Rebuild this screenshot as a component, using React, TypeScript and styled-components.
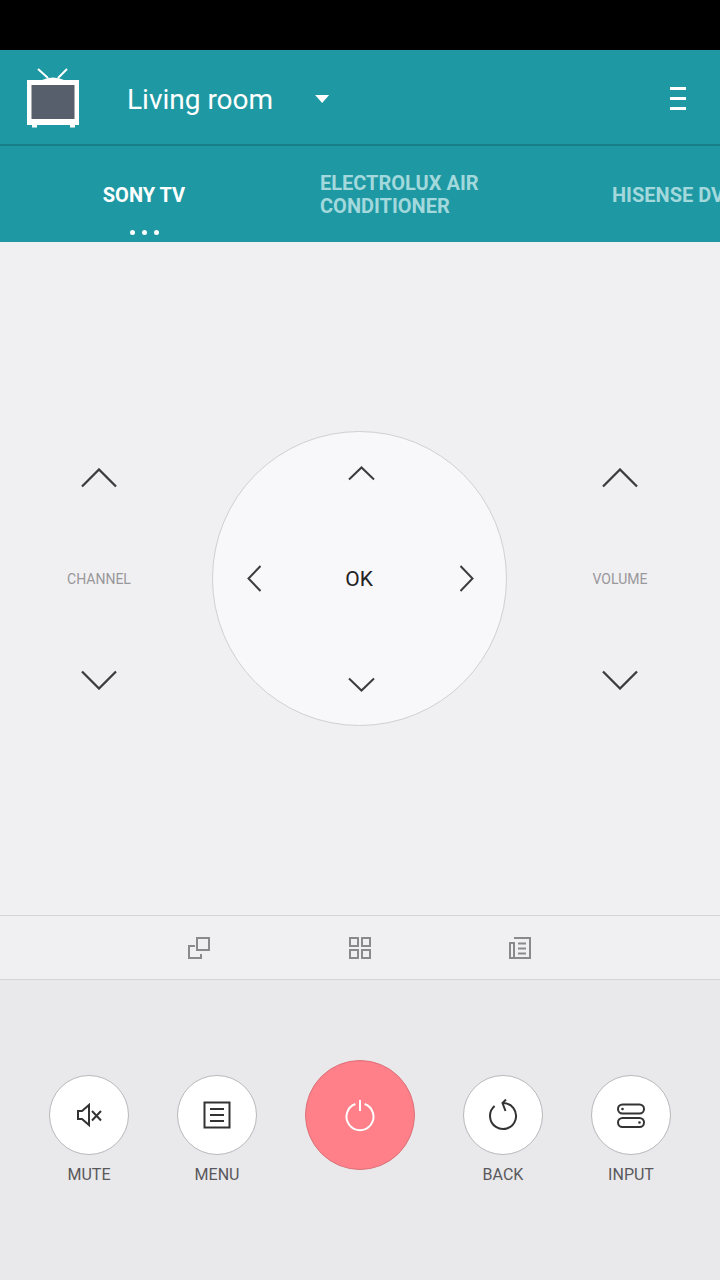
import React from "react";
import styled, { createGlobalStyle } from "styled-components";

const GlobalStyle = createGlobalStyle`
  html, body {
    margin: 0;
    padding: 0;
    background: #000;
  }
  * {
    box-sizing: border-box;
  }
`;

const Screen = styled.div`
  width: 720px;
  height: 1280px;
  display: flex;
  flex-direction: column;
  overflow: hidden;
  font-family: Roboto, "Liberation Sans", sans-serif;
`;

const StatusBar = styled.div`
  height: 50px;
  flex: none;
  background: #000;
`;

const Header = styled.header`
  height: 96px;
  flex: none;
  display: flex;
  align-items: center;
  padding: 2px 34px 0 25px;
  background: #1e99a3;
  border-bottom: 2px solid #187f89;
`;

const RoomName = styled.span`
  margin: 2px 0 0 46px;
  font-size: 28px;
  font-weight: 400;
  color: #fff;
`;

const Caret = styled.span`
  margin: 2px auto 0 42px;
  width: 14px;
  height: 8px;
  background: #fff;
  clip-path: polygon(0 0, 100% 0, 50% 100%);
`;

const TabStrip = styled.nav`
  height: 96px;
  flex: none;
  display: flex;
  background: #1e99a3;
  overflow: hidden;
`;

const Tab = styled.div<{ $width: number; $active?: boolean }>`
  position: relative;
  flex: 0 0 ${({ $width }) => $width}px;
  width: ${({ $width }) => $width}px;
  padding: ${({ $active }) => ($active ? "2px 0 0" : "2px 32px 0")};
  display: flex;
  align-items: center;
  justify-content: ${({ $active }) => ($active ? "center" : "flex-start")};
  font-size: 20px;
  font-weight: 700;
  line-height: 23px;
  color: ${({ $active }) => ($active ? "#fff" : "#a3d8dc")};
`;

const NoWrap = styled.span`
  white-space: nowrap;
`;

const Dots = styled.div`
  position: absolute;
  left: 0;
  right: 0;
  bottom: 7px;
  display: flex;
  justify-content: center;
  gap: 7px;
`;

const Dot = styled.i`
  width: 5px;
  height: 5px;
  border-radius: 50%;
  background: #fff;
`;

const Pad = styled.main`
  flex: 1;
  display: flex;
  align-items: center;
  justify-content: space-between;
  padding: 0 35px 0 34px;
  background: #f0eff1;
`;

const Rocker = styled.div`
  width: 130px;
  height: 222px;
  display: flex;
  flex-direction: column;
  align-items: center;
  justify-content: space-between;
`;

const RockerLabel = styled.span`
  font-size: 14px;
  color: #98979b;
`;

const Wheel = styled.div`
  width: 295px;
  height: 295px;
  display: grid;
  grid-template-columns: 83px 1fr 79px;
  grid-template-rows: 82px 1fr 82px;
  place-items: center;
  border: 1px solid #d0cfd2;
  border-radius: 50%;
  background: #f8f7fa;
`;

const WheelSlot = styled.div<{ $column: number; $row: number }>`
  grid-column: ${({ $column }) => $column};
  grid-row: ${({ $row }) => $row};
  display: flex;
`;

const OkLabel = styled.span`
  margin: 1px 5px 0 0;
  font-size: 21px;
  color: #222;
`;

const ShortcutBar = styled.div`
  height: 65px;
  flex: none;
  display: flex;
  align-items: center;
  justify-content: center;
  gap: 138px;
  background: #f0eff1;
  border-top: 1px solid #d5d4d7;
  border-bottom: 1px solid #d5d4d7;
`;

const Controls = styled.section`
  height: 300px;
  flex: none;
  display: grid;
  grid-template-columns: 128px 128px 158px 128px 128px;
  align-items: start;
  padding: 80px 25px 0;
  background: #e9e8ea;
`;

const Control = styled.div`
  display: flex;
  flex-direction: column;
  align-items: center;
  padding-top: 15px;
`;

const RoundButton = styled.button`
  width: 80px;
  height: 80px;
  padding: 0;
  display: flex;
  align-items: center;
  justify-content: center;
  border: 1px solid #b9b8bb;
  border-radius: 50%;
  background: #fff;
`;

const PowerButton = styled(RoundButton)`
  width: 110px;
  height: 110px;
  justify-self: center;
  border-color: #dc7078;
  background: #ff8088;
`;

const ControlLabel = styled.span`
  margin-top: 10px;
  font-size: 16px;
  line-height: 20px;
  color: #59585c;
`;

function TvLogo() {
  return (
    <svg width="56" height="62" viewBox="0 0 56 62">
      <path d="M13 2l10 9M42 2l-9 9" stroke="#fff" strokeWidth="2" />
      <path d="M17 13q5-2.500 11-2.500t11 2.500z" fill="#fff" />
      <path d="M7 56h5v4.500H7zM45 56h5v4.500h-5z" fill="#fff" />
      <rect x="2" y="13" width="52" height="45" fill="#fff" />
      <rect x="6.500" y="18" width="43" height="34" fill="#565f6b" />
    </svg>
  );
}

function MenuLines() {
  return (
    <svg width="16" height="23" viewBox="0 0 16 23">
      <path d="M0 1.500h16M0 11.500h16M0 21.500h16" stroke="#fff" strokeWidth="3" />
    </svg>
  );
}

function Chevron({ dir, size }: { dir: "up" | "down" | "left" | "right"; size: "big" | "small" }) {
  const turn = { up: 0, right: 90, down: 180, left: 270 }[dir];
  const w = size === "big" ? 36 : 27;
  const h = size === "big" ? 20 : 15;
  const horizontal = dir === "left" || dir === "right";
  return (
    <svg
      width={horizontal ? h : w}
      height={horizontal ? w : h}
      viewBox={horizontal ? `${-h / 2} ${-w / 2} ${h} ${w}` : `${-w / 2} ${-h / 2} ${w} ${h}`}
    >
      <path
        transform={`rotate(${turn})`}
        d={`M${-w / 2 + 1} ${h / 2 - 1.500}L0 ${-h / 2 + 1.500}L${w / 2 - 1} ${h / 2 - 1.500}`}
        fill="none"
        stroke="#3c3c40"
        strokeWidth={size === "big" ? 2.300 : 2}
      />
    </svg>
  );
}

function ShortcutIcon({ d }: { d: string }) {
  return (
    <svg width="22" height="22" viewBox="0 0 22 22" overflow="visible">
      <path d={d} fill="none" stroke="#8a8a8c" strokeWidth="2" />
    </svg>
  );
}

function ControlIcon({ children }: { children: React.ReactNode }) {
  return (
    <svg width="32" height="32" viewBox="0 0 32 32" fill="none" stroke="#333" strokeWidth="2">
      {children}
    </svg>
  );
}

export default function App() {
  return (
    <Screen>
      <GlobalStyle />
      <StatusBar />
      <Header>
        <TvLogo />
        <RoomName>Living room</RoomName>
        <Caret />
        <MenuLines />
      </Header>
      <TabStrip>
        <Tab $width={288} $active>
          SONY TV
          <Dots>
            <Dot />
            <Dot />
            <Dot />
          </Dots>
        </Tab>
        <Tab $width={292}>ELECTROLUX AIR CONDITIONER</Tab>
        <Tab $width={280}>
          <NoWrap>HISENSE DVD</NoWrap>
        </Tab>
      </TabStrip>
      <Pad>
        <Rocker>
          <Chevron dir="up" size="big" />
          <RockerLabel>CHANNEL</RockerLabel>
          <Chevron dir="down" size="big" />
        </Rocker>
        <Wheel>
          <WheelSlot $column={2} $row={1}>
            <Chevron dir="up" size="small" />
          </WheelSlot>
          <WheelSlot $column={1} $row={2}>
            <Chevron dir="left" size="small" />
          </WheelSlot>
          <WheelSlot $column={2} $row={2}>
            <OkLabel>OK</OkLabel>
          </WheelSlot>
          <WheelSlot $column={3} $row={2}>
            <Chevron dir="right" size="small" />
          </WheelSlot>
          <WheelSlot $column={2} $row={3}>
            <Chevron dir="down" size="small" />
          </WheelSlot>
        </Wheel>
        <Rocker>
          <Chevron dir="up" size="big" />
          <RockerLabel>VOLUME</RockerLabel>
          <Chevron dir="down" size="big" />
        </Rocker>
      </Pad>
      <ShortcutBar>
        <ShortcutIcon d="M8 1h12v12H8zM6 9H0v12h12v-4" />
        <ShortcutIcon d="M1 1h8v8H1zM13 1h8v8h-8zM1 13h8v8H1zM13 13h8v8h-8z" />
        <ShortcutIcon d="M5 1h16v20H1V6h4v15M9 6.500h8M9 11.500h8M9 16.500h8" />
      </ShortcutBar>
      <Controls>
        <Control>
          <RoundButton>
            <ControlIcon>
              <path d="M5 12h4l7-6v20l-7-6H5z" />
              <path d="M19 12l9 9.500M28 12l-9 9.500" />
            </ControlIcon>
          </RoundButton>
          <ControlLabel>MUTE</ControlLabel>
        </Control>
        <Control>
          <RoundButton>
            <ControlIcon>
              <rect x="3.500" y="3.500" width="25" height="25" />
              <path d="M9 10h14M9 16h14M9 22h14" />
            </ControlIcon>
          </RoundButton>
          <ControlLabel>MENU</ControlLabel>
        </Control>
        <PowerButton>
          <svg width="40" height="40" viewBox="0 0 40 40" fill="none" stroke="#fff" strokeWidth="2">
            <path d="M20 5v11M24.600 9A13.500 13.500 0 1 1 15.400 9" />
          </svg>
        </PowerButton>
        <Control>
          <RoundButton>
            <ControlIcon>
              <path d="M7.600 7.100A13 13 0 1 0 16 4" />
              <path d="M19 .5L15.500 4l3 8" />
            </ControlIcon>
          </RoundButton>
          <ControlLabel>BACK</ControlLabel>
        </Control>
        <Control>
          <RoundButton>
            <ControlIcon>
              <rect x="3" y="5.500" width="26" height="9" rx="4.500" />
              <rect x="3" y="19" width="26" height="9" rx="4.500" />
              <circle cx="7.500" cy="10" r="1.300" fill="#333" stroke="none" />
              <circle cx="24.500" cy="23.500" r="1.300" fill="#333" stroke="none" />
            </ControlIcon>
          </RoundButton>
          <ControlLabel>INPUT</ControlLabel>
        </Control>
      </Controls>
    </Screen>
  );
}
